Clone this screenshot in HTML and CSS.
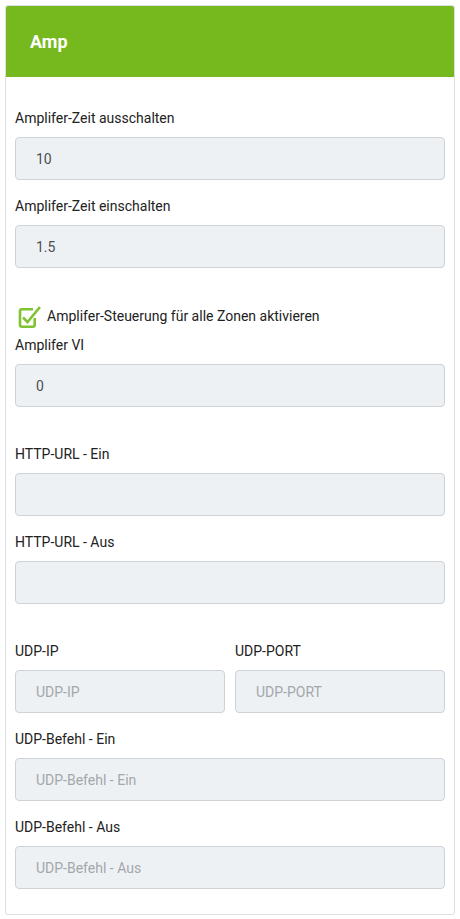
FILE: index.html
```html
<!DOCTYPE html>
<html lang="de">
<head>
    <meta charset="UTF-8">
    <meta name="viewport" content="width=device-width, initial-scale=1.0">
    <title>Amp</title>
    <link rel="stylesheet" href="styles.css">
</head>
<body>
    <div class="card">
        <div class="card-header">Amp</div>
        <div class="card-body">
            <div class="form-group">
                <label>Amplifer-Zeit ausschalten</label>
                <input type="text" value="10">
            </div>
            <div class="form-group">
                <label>Amplifer-Zeit einschalten</label>
                <input type="text" value="1.5">
            </div>

            <div class="check-row">
                <svg class="check" width="26" height="24" viewBox="0 0 26 24">
                    <path d="M18 5.3 H7 A2 2 0 0 0 5 7.3 V20.7 A2 2 0 0 0 7 22.7 H17.7 A2 2 0 0 0 19.7 20.7 V14" fill="none" stroke="#80c232" stroke-width="2.6"/>
                    <path d="M8 13.5 L12.5 18 L25 3" fill="none" stroke="#80c232" stroke-width="2.6"/>
                </svg>
                <span>Amplifer-Steuerung für alle Zonen aktivieren</span>
            </div>
            <div class="form-group">
                <label>Amplifer VI</label>
                <input type="text" value="0">
            </div>

            <div class="form-group section">
                <label>HTTP-URL - Ein</label>
                <input type="text">
            </div>
            <div class="form-group">
                <label>HTTP-URL - Aus</label>
                <input type="text">
            </div>

            <div class="form-row section">
                <div class="form-group">
                    <label>UDP-IP</label>
                    <input type="text" placeholder="UDP-IP">
                </div>
                <div class="form-group">
                    <label>UDP-PORT</label>
                    <input type="text" placeholder="UDP-PORT">
                </div>
            </div>
            <div class="form-group">
                <label>UDP-Befehl - Ein</label>
                <input type="text" placeholder="UDP-Befehl - Ein">
            </div>
            <div class="form-group">
                <label>UDP-Befehl - Aus</label>
                <input type="text" placeholder="UDP-Befehl - Aus">
            </div>
        </div>
    </div>
</body>
</html>
```

FILE: styles.css
```css
body {
  margin: 0;
  padding: 5px;
  background: #ffffff;
  font-family: Roboto, "Liberation Sans", sans-serif;
  font-size: 14px;
  color: #222;
}

.card {
  border: 1px solid #dcdfe3;
  border-radius: 3px;
  overflow: hidden;
  background: #fff;
}

.card-header {
  height: 71px;
  display: flex;
  align-items: center;
  padding: 0 24px;
  background: #76b91e;
  color: #fff;
  font-size: 18px;
  font-weight: bold;
}

/* flex column so the margins add up instead of collapsing */
.card-body {
  display: flex;
  flex-direction: column;
  padding: 31px 9px 9px;
}

.form-group {
  display: flex;
  flex-direction: column;
  margin-bottom: 16px;
}

.form-group label {
  line-height: 20px;
  margin-bottom: 9px;
}

.form-group input {
  height: 43px;
  box-sizing: border-box;
  border: 1px solid #cfd3d8;
  border-radius: 4px;
  background: #eef1f4;
  padding: 0 20px;
  font-family: Roboto, "Liberation Sans", sans-serif;
  font-size: 14px;
  color: #4a4f55;
  width: 100%;
}

.form-group input::placeholder {
  color: #a3a7ab;
}

.section {
  margin-top: 21px;
}

.check-row {
  display: flex;
  align-items: center;
  gap: 6px;
  height: 22px;
  margin: 21px 0 8px;
}

.check {
  flex: none;
}

.form-row {
  display: grid;
  grid-template-columns: 1fr 1fr;
  gap: 10px;
  margin-bottom: 16px;
}

.form-row .form-group {
  margin-bottom: 0;
}
```
